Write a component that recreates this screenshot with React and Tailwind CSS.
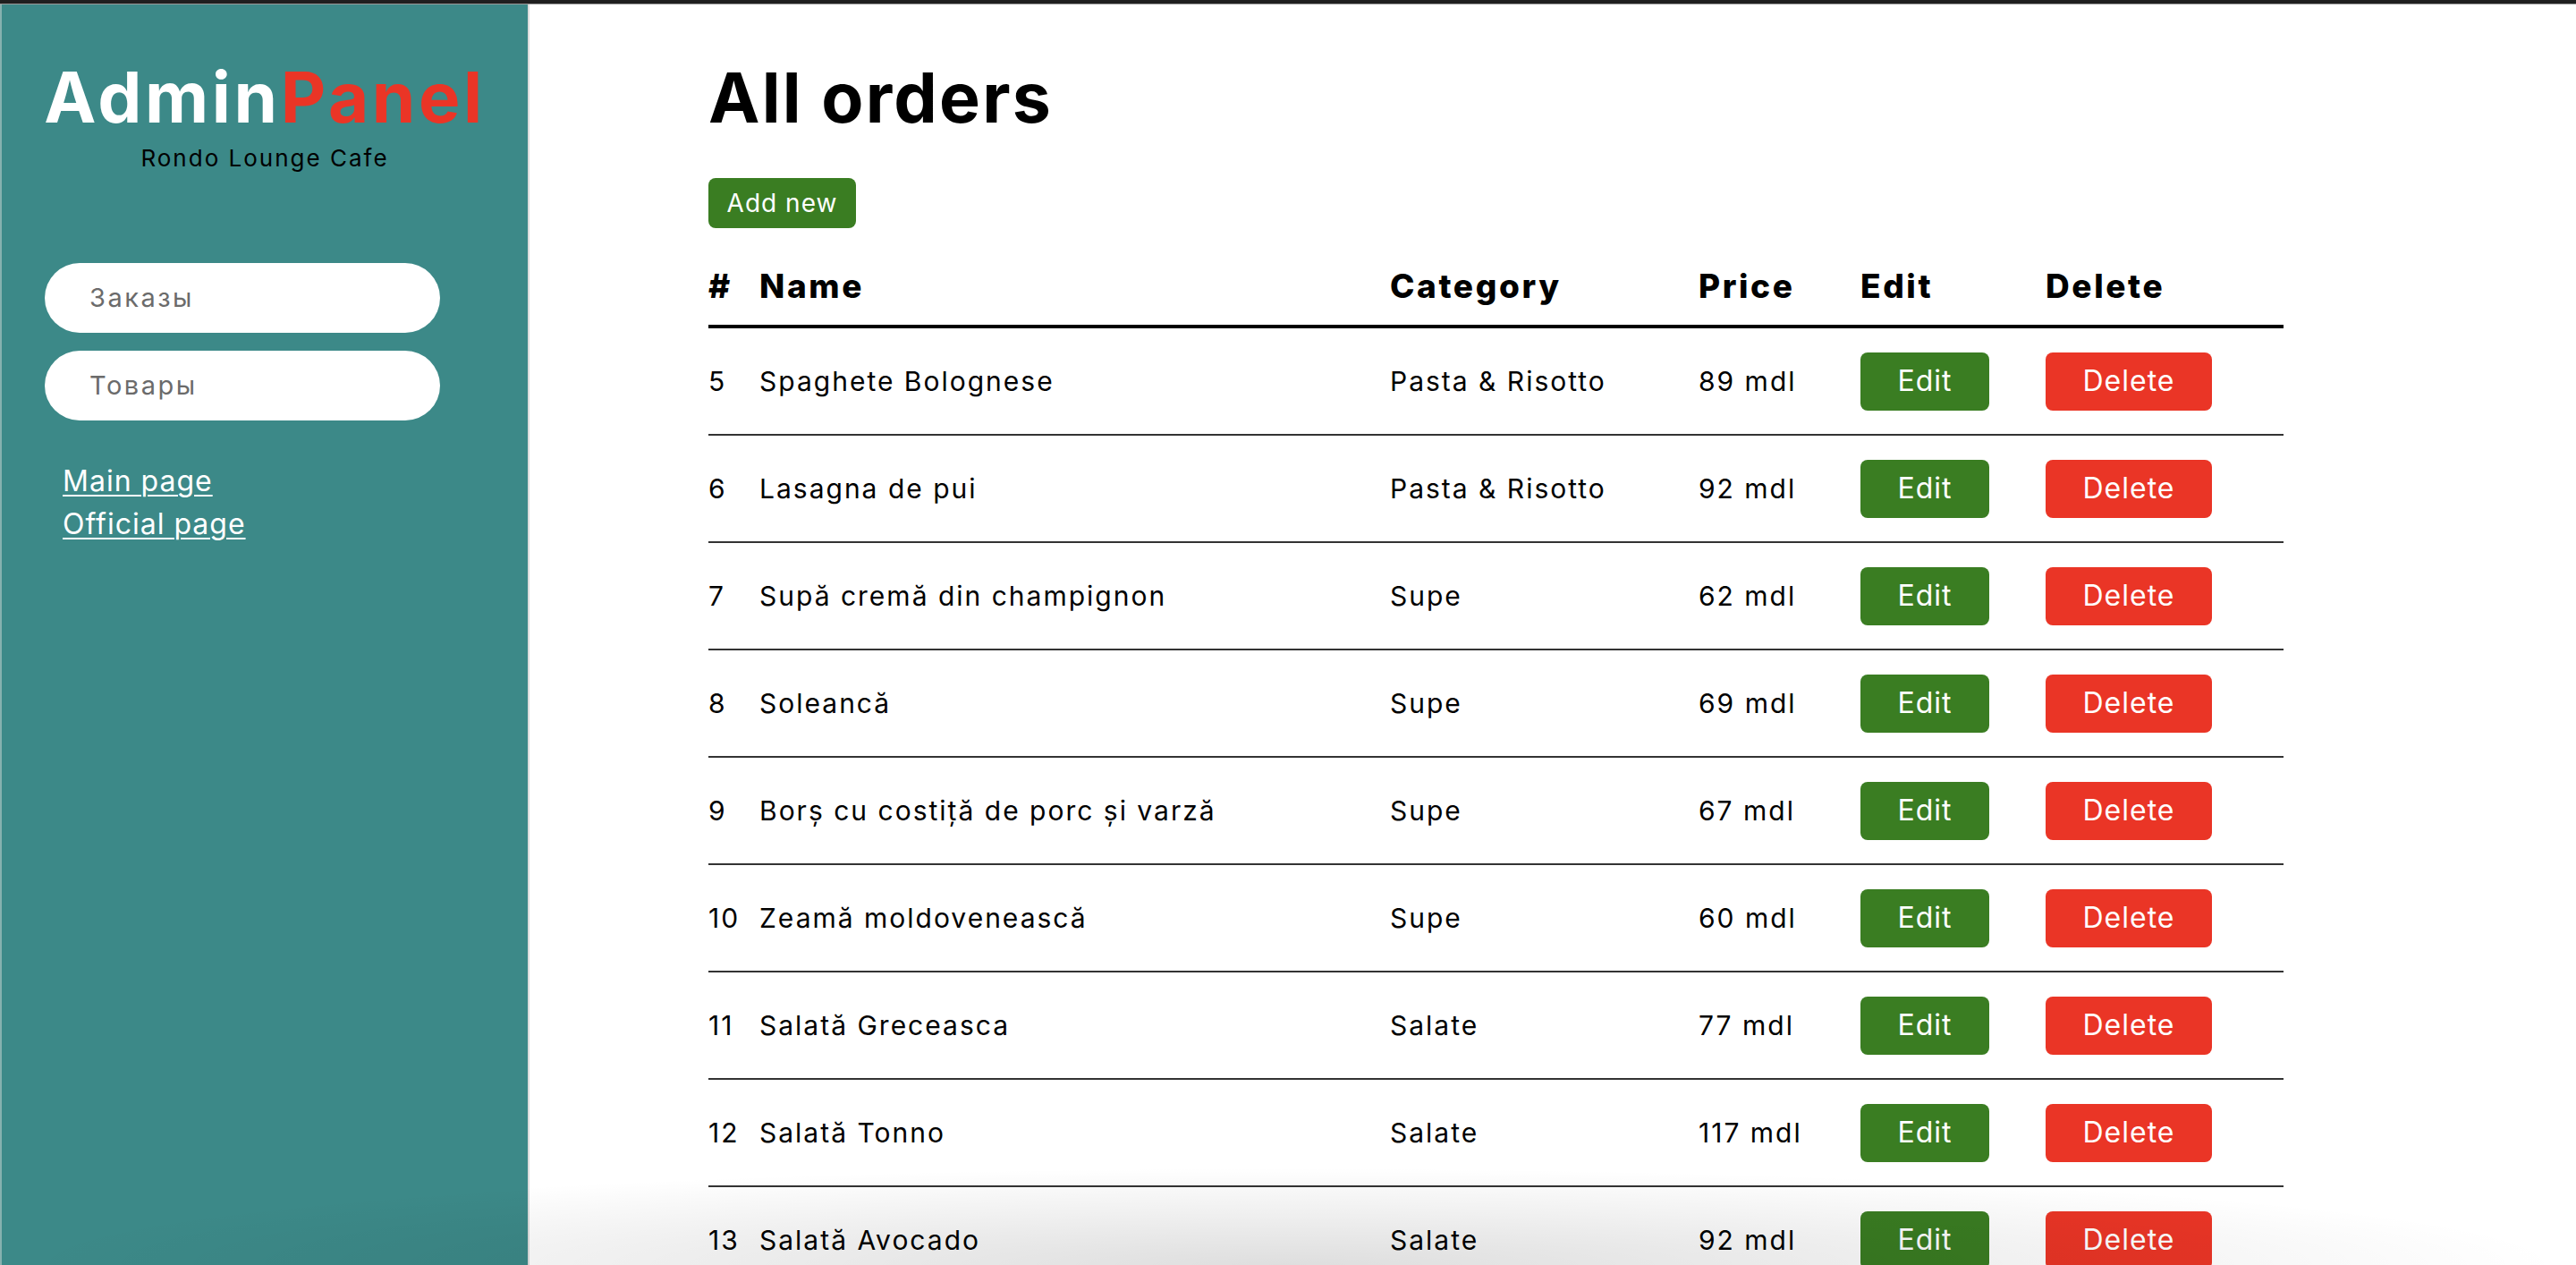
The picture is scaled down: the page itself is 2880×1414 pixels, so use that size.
import React from 'react';

const orders = [
    { id: 5, name: 'Spaghete Bolognese', category: 'Pasta & Risotto', price: 89 },
    { id: 6, name: 'Lasagna de pui', category: 'Pasta & Risotto', price: 92 },
    { id: 7, name: 'Supă cremă din champignon', category: 'Supe', price: 62 },
    { id: 8, name: 'Soleancă', category: 'Supe', price: 69 },
    { id: 9, name: 'Borș cu costiță de porc și varză', category: 'Supe', price: 67 },
    { id: 10, name: 'Zeamă moldovenească', category: 'Supe', price: 60 },
    { id: 11, name: 'Salată Greceasca', category: 'Salate', price: 77 },
    { id: 12, name: 'Salată Tonno', category: 'Salate', price: 117 },
    { id: 13, name: 'Salată Avocado', category: 'Salate', price: 92 },
    { id: 14, name: 'Salată Caesar', category: 'Salate', price: 89 },
];

const cols = 'grid grid-cols-[57px_705px_345px_181px_207px_266px]';

function Sidebar() {
    return (
        <aside className="w-[592px] shrink-0 flex bg-[#3c8988] border-r-2 border-[#dcdcdc]">
            <div className="w-[2px] bg-[#86b1af]" />
            <div className="flex-1 flex flex-col">
                <h1 className="mt-[65px] text-center text-[78px] leading-none font-bold tracking-[3.6px] text-white">
                    Admin<span className="text-[#ea3526]">Panel</span>
                </h1>
                <p className="mt-[16px] text-center text-[26px] leading-none tracking-[2px] text-black">Rondo Lounge Cafe</p>

                <div className="mt-[104px] ml-[48px] flex flex-col gap-[20px]">
                    {['Заказы', 'Товары'].map(item => (
                        <button key={item} className="w-[442px] h-[78px] rounded-full bg-white text-left pl-[50px] text-[29px] tracking-[2.5px] text-[#6b6b6b]">
                            {item}
                        </button>
                    ))}
                </div>

                <div className="mt-[44px] ml-[68px] flex flex-col items-start text-[32px] leading-[48px] tracking-[1px] text-white">
                    <a href="#" className="underline underline-offset-[4px] decoration-[2px]">Main page</a>
                    <a href="#" className="underline underline-offset-[4px] decoration-[2px]">Official page</a>
                </div>
            </div>
        </aside>
    );
}

function OrdersTable() {
    return (
        <div className="w-[1761px]">
            <div className={`${cols} mt-[46px] pb-[25px] border-b-4 border-black text-[37px] leading-none font-extrabold tracking-[2.6px]`}>
                <span>#</span>
                <span>Name</span>
                <span>Category</span>
                <span>Price</span>
                <span>Edit</span>
                <span>Delete</span>
            </div>
            {orders.map(order => (
                <div key={order.id} className={`${cols} h-[120px] items-center border-b-2 border-[#333] text-[30px] leading-none tracking-[2px]`}>
                    <span>{order.id}</span>
                    <span>{order.name}</span>
                    <span>{order.category}</span>
                    <span>{order.price} mdl</span>
                    <span>
                        <button className="w-[144px] h-[65px] rounded-[8px] bg-[#3a7d22] text-white text-[32px] tracking-[1px]">Edit</button>
                    </span>
                    <span>
                        <button className="w-[186px] h-[65px] rounded-[8px] bg-[#ea3526] text-white text-[32px] tracking-[1px]">Delete</button>
                    </span>
                </div>
            ))}
        </div>
    );
}

export default function App() {
    return (
        <div className="relative h-[1414px] overflow-hidden flex flex-col bg-white font-[Inter,sans-serif] text-black">
            <div className="h-[5px] shrink-0 bg-[#1f1f1f] border-b border-[#9a9a9a]" />
            <div className="flex flex-1 min-h-0">
                <Sidebar />
                <main className="flex-1 pl-[200px]">
                    <h2 className="mt-[66px] text-[77px] leading-none font-bold tracking-[2.2px]">All orders</h2>
                    <button className="mt-[51px] w-[165px] h-[56px] rounded-[8px] bg-[#3a7d22] text-white text-[28px] tracking-[1px]">
                        Add new
                    </button>
                    <OrdersTable />
                </main>
            </div>
            <div className="pointer-events-none absolute bottom-0 left-0 right-0 h-[110px] bg-[radial-gradient(ellipse_at_bottom,rgba(0,0,0,0.13),transparent_70%)]" />
        </div>
    );
}
